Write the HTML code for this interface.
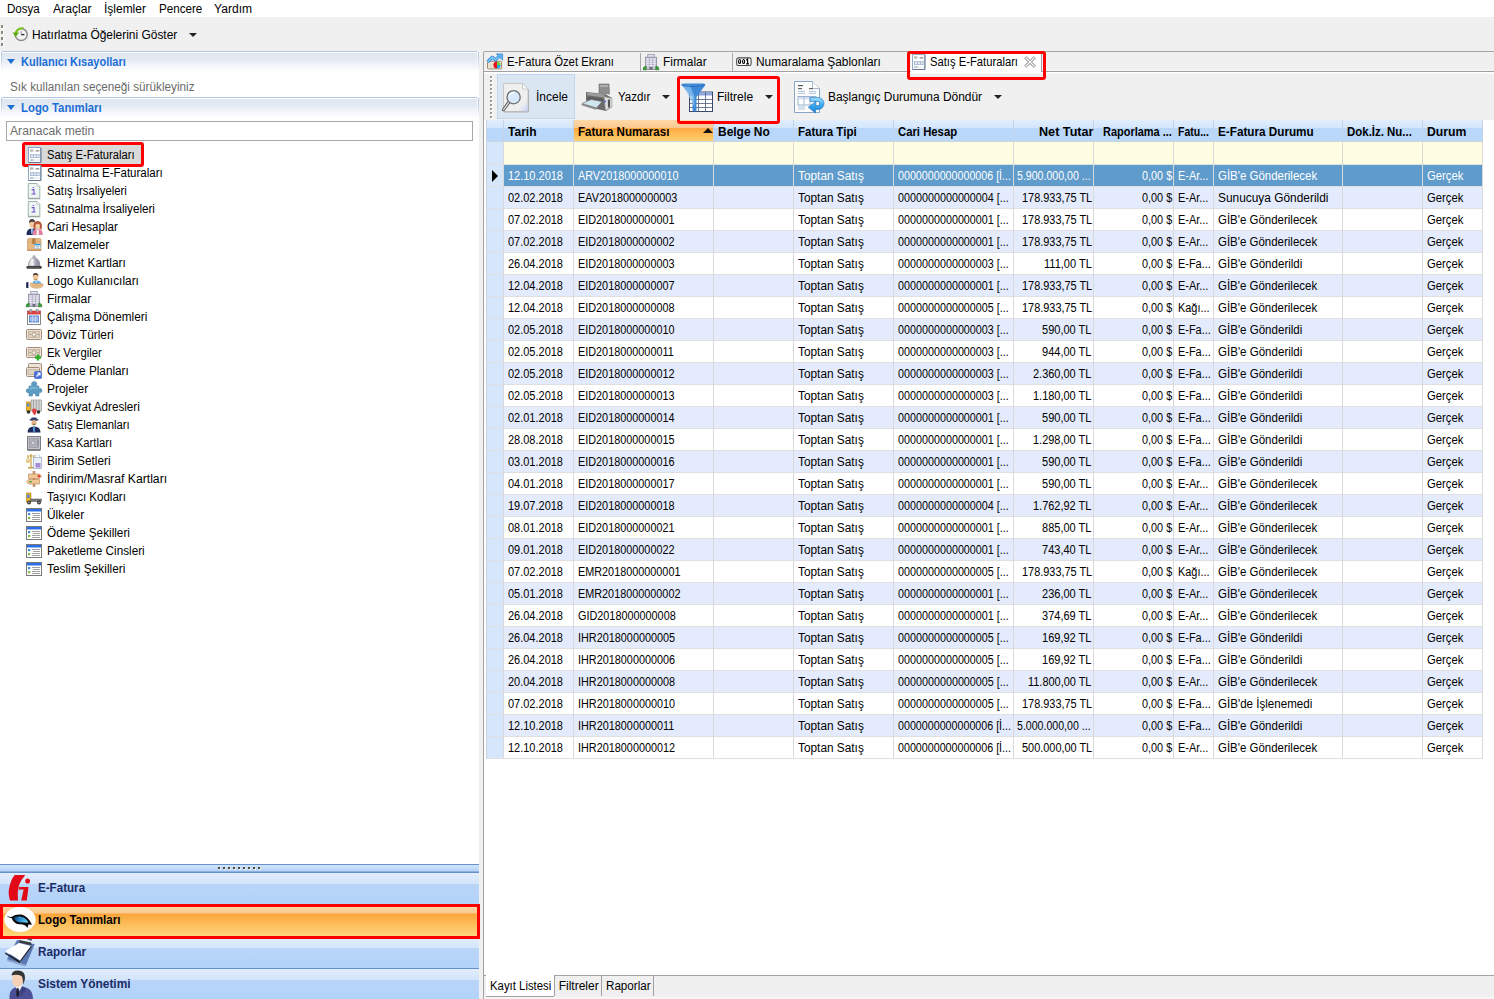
<!DOCTYPE html>
<html><head><meta charset="utf-8"><title>Logo</title>
<style>
*{margin:0;padding:0;box-sizing:border-box}
html,body{width:1494px;height:999px;overflow:hidden;background:#f0f0f0;font-family:"Liberation Sans",sans-serif;font-size:12px;color:#000}
.a{position:absolute}
svg{overflow:visible}
.t{position:absolute;white-space:nowrap;line-height:13px;transform-origin:0 0}
</style></head><body>

<div class="a" style="left:0px;top:0px;width:1494px;height:17px;background:#fff"></div>
<div class="t" style="left:6.82px;top:3.00px;transform:scaleX(0.9644)">Dosya</div>
<div class="t" style="left:52.59px;top:3.00px;transform:scaleX(1.0129)">Araçlar</div>
<div class="t" style="left:103.90px;top:3.00px;transform:scaleX(0.9975)">İşlemler</div>
<div class="t" style="left:158.72px;top:3.00px;transform:scaleX(0.9688)">Pencere</div>
<div class="t" style="left:214.40px;top:3.00px;transform:scaleX(1.0082)">Yardım</div>
<div class="a" style="left:1px;top:25px;width:2px;height:3px;background:#8d8a7e;box-shadow:1px 1px 0 #fff"></div>
<div class="a" style="left:1px;top:31px;width:2px;height:3px;background:#8d8a7e;box-shadow:1px 1px 0 #fff"></div>
<div class="a" style="left:1px;top:37px;width:2px;height:3px;background:#8d8a7e;box-shadow:1px 1px 0 #fff"></div>
<div class="a" style="left:1px;top:43px;width:2px;height:3px;background:#8d8a7e;box-shadow:1px 1px 0 #fff"></div>
<svg class="a" style="left:10px;top:24px" width="20" height="20" viewBox="0 0 20 20">
<circle cx="11.2" cy="10.6" r="6" fill="#f4f4f4" stroke="#8c8c8c" stroke-width="1.5"/>
<path d="M11.2 10.6h3.2" stroke="#222" stroke-width="1.3"/><path d="M11.2 7.2v3.4" stroke="#888" stroke-width="0.9"/>
<path d="M13.5 4.3 Q7.5 3.8 5.8 9.2" stroke="#7cc520" stroke-width="2.2" fill="none"/>
<path d="M2.6 8.4 L9 8.6 L5.6 13z" fill="#5eaa10"/>
</svg>
<div class="t" style="left:32.00px;top:29.00px;transform:scaleX(0.9949)">Hatırlatma Öğelerini Göster</div>
<div class="a" style="left:189px;top:33px;width:0px;height:0px;border-left:4px solid transparent;border-right:4px solid transparent;border-top:4px solid #222"></div>
<div class="a" style="left:0px;top:51px;width:479px;height:948px;background:#fff"></div>
<div class="a" style="left:1px;top:51px;width:478px;height:23px;border-radius:3px 3px 0 0;background:linear-gradient(#dfe6ef 2px,#e5ebf3 9px,#f4f6fa 15px,#ffffff 21px)"></div><div class="a" style="left:2px;top:51px;width:475px;height:1px;background:#b2c7df"></div><div class="a" style="left:2px;top:52px;width:475px;height:1px;background:#fff"></div><div class="a" style="left:1px;top:52px;width:1px;height:18px;background:linear-gradient(#b2c7df,rgba(178,199,223,0))"></div><div class="a" style="left:478px;top:52px;width:1px;height:18px;background:linear-gradient(#b2c7df,rgba(178,199,223,0))"></div><div class="a" style="left:477px;top:53px;width:1px;height:16px;background:linear-gradient(#fff,rgba(255,255,255,0))"></div><div class="a" style="left:7px;top:59px;width:0px;height:0px;border-left:4px solid transparent;border-right:4px solid transparent;border-top:5px solid #1d6fd0"></div><div class="t" style="left:21.24px;top:56.00px;transform:scaleX(0.9190);font-weight:bold;color:#1b6ed6">Kullanıcı Kısayolları</div>
<div class="t" style="left:9.81px;top:81.00px;transform:scaleX(0.9774);color:#6b6b6b">Sık kullanılan seçeneği sürükleyiniz</div>
<div class="a" style="left:1px;top:97px;width:478px;height:23px;border-radius:3px 3px 0 0;background:linear-gradient(#dfe6ef 2px,#e5ebf3 9px,#f4f6fa 15px,#ffffff 21px)"></div><div class="a" style="left:2px;top:97px;width:475px;height:1px;background:#b2c7df"></div><div class="a" style="left:2px;top:98px;width:475px;height:1px;background:#fff"></div><div class="a" style="left:1px;top:98px;width:1px;height:18px;background:linear-gradient(#b2c7df,rgba(178,199,223,0))"></div><div class="a" style="left:478px;top:98px;width:1px;height:18px;background:linear-gradient(#b2c7df,rgba(178,199,223,0))"></div><div class="a" style="left:477px;top:99px;width:1px;height:16px;background:linear-gradient(#fff,rgba(255,255,255,0))"></div><div class="a" style="left:7px;top:105px;width:0px;height:0px;border-left:4px solid transparent;border-right:4px solid transparent;border-top:5px solid #1d6fd0"></div><div class="t" style="left:21.23px;top:102.00px;transform:scaleX(0.9482);font-weight:bold;color:#1b6ed6">Logo Tanımları</div>
<div class="a" style="left:6px;top:121px;width:467px;height:20px;border:1px solid #a8a8a8;background:#fff"></div>
<div class="t" style="left:10.49px;top:125.00px;transform:scaleX(1.0111);color:#6d6d6d">Aranacak metin</div>
<div class="a" style="left:22px;top:142px;width:122px;height:25px;border:3px solid #ff0000;border-radius:3px;background:#d9d9d9"></div>
<svg class="a" style="left:27px;top:147px" width="16" height="16" viewBox="0 0 16 16"><path d="M1.5 0.5h12.4v15h-12.4z" fill="#fff" stroke="#93a8c2"/>
<path d="M13.9 1v14.5h-12.4" stroke="#5e6e86" fill="none" stroke-width="0.9"/>
<rect x="3" y="2.4" width="3.4" height="2.2" fill="#b4b4b4"/>
<rect x="8.6" y="3" width="3.6" height="1.6" fill="#a0a0a0"/>
<rect x="3" y="7.2" width="9.6" height="3.7" fill="#a6bad4"/>
<rect x="4.1" y="8.4" width="2" height="1.4" fill="#fff"/><rect x="7.1" y="8.4" width="2" height="1.4" fill="#fff"/><rect x="10.1" y="8.4" width="1.6" height="1.4" fill="#fff"/>
<rect x="3" y="12.4" width="9.6" height="1.3" fill="#e6e9ee"/><rect x="3" y="12.4" width="3.6" height="1.3" fill="#a6bad4"/></svg>
<div class="t" style="left:46.93px;top:149.00px;transform:scaleX(0.9305)">Satış E-Faturaları</div>
<svg class="a" style="left:27px;top:165px" width="16" height="16" viewBox="0 0 16 16"><path d="M1.5 0.5h12.4v15h-12.4z" fill="#fff" stroke="#93a8c2"/>
<path d="M13.9 1v14.5h-12.4" stroke="#5e6e86" fill="none" stroke-width="0.9"/>
<rect x="3" y="2.4" width="3.4" height="2.2" fill="#b4b4b4"/>
<rect x="8.6" y="3" width="3.6" height="1.6" fill="#a0a0a0"/>
<rect x="3" y="7.2" width="9.6" height="3.7" fill="#a6bad4"/>
<rect x="4.1" y="8.4" width="2" height="1.4" fill="#fff"/><rect x="7.1" y="8.4" width="2" height="1.4" fill="#fff"/><rect x="10.1" y="8.4" width="1.6" height="1.4" fill="#fff"/>
<rect x="3" y="12.4" width="9.6" height="1.3" fill="#e6e9ee"/><rect x="3" y="12.4" width="3.6" height="1.3" fill="#a6bad4"/></svg>
<div class="t" style="left:46.92px;top:167.00px;transform:scaleX(0.9584)">Satınalma E-Faturaları</div>
<svg class="a" style="left:27px;top:183px" width="16" height="16" viewBox="0 0 16 16"><path d="M1.3 0.5h8.7l2.8 2.8v12h-11.5z" fill="#eef6f4" stroke="#9fb2ae"/>
<path d="M10 0.5v2.8h2.8" fill="#fff" stroke="#b0c0bc" stroke-width="0.8"/>
<path d="M0.8 15.8h12.5" stroke="#7c8886" stroke-width="0.9" opacity="0.7"/>
<ellipse cx="6.4" cy="4.5" rx="0.9" ry="0.6" fill="#6a4ad8"/>
<path d="M4.7 6.6h2.3v4.2M4.6 10.9h3.9" stroke="#6a4ad8" stroke-width="1.05" fill="none"/></svg>
<div class="t" style="left:46.93px;top:185.00px;transform:scaleX(0.9422)">Satış İrsaliyeleri</div>
<svg class="a" style="left:27px;top:201px" width="16" height="16" viewBox="0 0 16 16"><path d="M1.3 0.5h8.7l2.8 2.8v12h-11.5z" fill="#eef6f4" stroke="#9fb2ae"/>
<path d="M10 0.5v2.8h2.8" fill="#fff" stroke="#b0c0bc" stroke-width="0.8"/>
<path d="M0.8 15.8h12.5" stroke="#7c8886" stroke-width="0.9" opacity="0.7"/>
<ellipse cx="6.4" cy="4.5" rx="0.9" ry="0.6" fill="#6a4ad8"/>
<path d="M4.7 6.6h2.3v4.2M4.6 10.9h3.9" stroke="#6a4ad8" stroke-width="1.05" fill="none"/></svg>
<div class="t" style="left:46.92px;top:203.00px;transform:scaleX(0.9688)">Satınalma İrsaliyeleri</div>
<svg class="a" style="left:27px;top:219px" width="16" height="16" viewBox="0 0 16 16"><path d="M-0.5 16 Q-0.5 10.5 3 9.8 L6.5 9.5 Q9.5 10 9.5 16z" fill="#1e2a60"/>
<path d="M4 9.6 H6.2 V14.5 H4z" fill="#f2f2f2"/><path d="M4.6 10 h1 l0.3 3.6 -0.8 0.9 -0.8 -0.9z" fill="#5a90d8"/>
<ellipse cx="4.9" cy="5.6" rx="2.5" ry="3.2" fill="#f3c9a1"/>
<path d="M2 5 Q1.6 0 5 0 Q8.6 0 8 5 L7.6 3.2 Q5 2.2 2.6 3.4z" fill="#4a3f3f"/>
<path d="M5.5 16 Q5.5 11 8.8 10.3 L12.5 10.3 Q15.8 11 15.8 16z" fill="#df7f9c"/>
<path d="M9.6 10.6 h2.2 v5.4 h-2.2z" fill="#f4f0f0"/>
<path d="M6.6 8.5 Q6 2 10.7 2 Q15.4 2 14.8 8.5 L14.6 11 Q13.6 9.6 12.8 9.4 L8.6 9.4 Q7.6 9.8 6.8 11z" fill="#b5563a"/>
<ellipse cx="10.7" cy="6.9" rx="2.3" ry="2.9" fill="#f6cfa6"/>
<path d="M8.3 5.5 Q10 3.2 13.2 5" stroke="#b5563a" stroke-width="1.2" fill="none"/></svg>
<div class="t" style="left:46.92px;top:221.00px;transform:scaleX(0.9651)">Cari Hesaplar</div>
<svg class="a" style="left:27px;top:237px" width="16" height="16" viewBox="0 0 16 16"><path d="M0.5 3 Q0.5 1.5 2 1.5 H12.5 Q14 1.5 14 3 V13.5 H0.5z" fill="#e6b883" stroke="#c08a50" stroke-width="0.6"/>
<path d="M0.8 4.8 H13.7" stroke="#d4a06a" stroke-width="0.6"/>
<rect x="5" y="1.5" width="3.6" height="5.5" fill="#b98048"/>
<rect x="7.5" y="7" width="6" height="4.6" fill="#eaf4fa" stroke="#8ab0d0" stroke-width="0.5"/>
<rect x="7.5" y="7" width="6" height="1.3" fill="#2a9ae8"/>
<rect x="9" y="9.3" width="3" height="1" fill="#9ab0c0"/>
<rect x="0.5" y="12.6" width="13.5" height="1.2" fill="#c48c58"/></svg>
<div class="t" style="left:46.90px;top:239.00px;transform:scaleX(1.0030)">Malzemeler</div>
<svg class="a" style="left:27px;top:255px" width="16" height="16" viewBox="0 0 16 16"><defs><linearGradient id="bellg" x1="0" y1="0" x2="1" y2="0"><stop offset="0" stop-color="#c8c8d0"/><stop offset="0.35" stop-color="#f4f4f8"/><stop offset="0.6" stop-color="#a8a8b8"/><stop offset="1" stop-color="#8a8a9a"/></linearGradient></defs>
<rect x="5.9" y="0.6" width="2.4" height="2.8" rx="1" fill="#c0c0c8" stroke="#8a8a92" stroke-width="0.5"/>
<path d="M1.4 11.2 Q1.4 3 7.1 3 Q12.9 3 12.9 11.2z" fill="url(#bellg)" stroke="#808088" stroke-width="0.6"/>
<rect x="-0.6" y="10.9" width="15.4" height="2.9" rx="1.3" fill="#3a3a3a"/>
<path d="M1 12.3 H13.2" stroke="#777" stroke-width="0.5"/></svg>
<div class="t" style="left:46.90px;top:257.00px;transform:scaleX(0.9943)">Hizmet Kartları</div>
<svg class="a" style="left:27px;top:273px" width="16" height="16" viewBox="0 0 16 16"><path d="M5.5 12 Q5 7.6 9 7.3 Q13.5 7.3 14.8 11.5z" fill="#6ab4e8"/>
<path d="M8.3 7.4 L9.3 9.5 L10.2 7.4z" fill="#fff"/>
<ellipse cx="8.6" cy="3.9" rx="2.7" ry="3.4" fill="#edc494"/>
<path d="M7.3 5.8 Q8.6 7.2 9.9 5.8 L9.6 7 Q8.6 7.6 7.6 7z" fill="#9a6a44"/>
<path d="M5.8 3.6 Q5.6 0 8.6 0 Q11.6 0 11.4 3.6 L10.8 2.2 Q8.6 1.3 6.4 2.2z" fill="#4a3830"/>
<path d="M3 10.2 Q6 9.6 9 11 Q12 10 16 11.2 Q16.5 13.5 14 14.6 Q10 15.8 6 14.8 Q3.5 14 3 12.5z" fill="#ecc08c" stroke="#b88a5a" stroke-width="0.5"/>
<path d="M5 12.4 Q9 13.4 14 12" stroke="#c89a68" stroke-width="0.5" fill="none"/>
<rect x="-0.8" y="9.2" width="2.4" height="5.8" fill="#1a2050"/><rect x="1.6" y="9.4" width="1.6" height="5.4" fill="#f4f4f4"/></svg>
<div class="t" style="left:46.90px;top:275.00px;transform:scaleX(0.9911)">Logo Kullanıcıları</div>
<svg class="a" style="left:27px;top:291px" width="16" height="16" viewBox="0 0 16 16"><rect x="3.8" y="0.6" width="6.4" height="3" fill="#e2e2f0" stroke="#8a8a9c" stroke-width="0.7"/>
<rect x="1.6" y="3.2" width="10.8" height="12.4" fill="#c6c6d8" stroke="#7c7c8e" stroke-width="0.7"/>
<rect x="2.4" y="4.4" width="9.2" height="1.1" fill="#eeeef8"/><rect x="2.4" y="6.6" width="9.2" height="1.1" fill="#eeeef8"/>
<rect x="2.4" y="8.8" width="9.2" height="1.1" fill="#eeeef8"/><rect x="2.4" y="11" width="9.2" height="1.1" fill="#eeeef8"/>
<path d="M5.3 4v8.5M8.6 4v8.5" stroke="#9a9aae" stroke-width="0.6"/>
<rect x="5.5" y="13" width="3" height="2.6" fill="#6a6a7a"/>
<path d="M-1 15.8 Q-1.2 12.2 2.3 12.2 V15.8z" fill="#3aa23a" stroke="#1f6e1f" stroke-width="0.5"/>
<path d="M11.7 12.2 Q15.2 12 15 15.8 H11.7z" fill="#3aa23a" stroke="#1f6e1f" stroke-width="0.5"/></svg>
<div class="t" style="left:46.90px;top:293.00px;transform:scaleX(1.0046)">Firmalar</div>
<svg class="a" style="left:26px;top:309px" width="16" height="16" viewBox="0 0 16 16"><rect x="1.5" y="2" width="13" height="13.5" fill="#fff" stroke="#888"/>
<rect x="1.5" y="2" width="13" height="3.5" fill="#e04040"/>
<rect x="4" y="0.5" width="1.5" height="3" fill="#ccc" stroke="#777" stroke-width="0.5"/><rect x="10.5" y="0.5" width="1.5" height="3" fill="#ccc" stroke="#777" stroke-width="0.5"/>
<rect x="3.5" y="7" width="9" height="6" fill="#8eaee6" stroke="#3f6fd0" stroke-width="0.8"/>
<path d="M3.5 9h9M3.5 11h9M6.5 7v6M9.5 7v6" stroke="#d8e4f8" stroke-width="0.6"/></svg>
<div class="t" style="left:46.91px;top:311.00px;transform:scaleX(0.9831)">Çalışma Dönemleri</div>
<svg class="a" style="left:26px;top:327px" width="16" height="16" viewBox="0 0 16 16"><rect x="0.5" y="2.5" width="15" height="10" rx="1" fill="#ece4d8" stroke="#a08c78"/>
<rect x="2.5" y="4.5" width="11" height="6" fill="#e0d4c2" stroke="#b8a690" stroke-width="0.7"/>
<circle cx="8" cy="7.5" r="2" fill="#f3ede4" stroke="#8a7866" stroke-width="0.6"/>
<rect x="3.5" y="7" width="1" height="1" fill="#8a7866"/><rect x="11.5" y="7" width="1" height="1" fill="#8a7866"/></svg>
<div class="t" style="left:46.90px;top:329.00px;transform:scaleX(0.9922)">Döviz Türleri</div>
<svg class="a" style="left:26px;top:345px" width="16" height="16" viewBox="0 0 16 16"><rect x="0.5" y="2.5" width="15" height="10" rx="1" fill="#ece4d8" stroke="#a08c78"/>
<rect x="2.5" y="4.5" width="11" height="6" fill="#e0d4c2" stroke="#b8a690" stroke-width="0.7"/>
<circle cx="8" cy="7.5" r="2" fill="#f3ede4" stroke="#8a7866" stroke-width="0.6"/>
<rect x="3.5" y="7" width="1" height="1" fill="#8a7866"/><rect x="11.5" y="7" width="1" height="1" fill="#8a7866"/><path d="M12 9.5v6M9 12.5h6" stroke="#2eae2e" stroke-width="2.4"/></svg>
<div class="t" style="left:46.93px;top:347.00px;transform:scaleX(0.9444)">Ek Vergiler</div>
<svg class="a" style="left:26px;top:363px" width="16" height="16" viewBox="0 0 16 16"><rect x="2.5" y="0.5" width="13" height="8" rx="1" fill="#ece4d8" stroke="#a08c78"/>
<rect x="0.5" y="4.5" width="13" height="9" rx="1" fill="#ece4d8" stroke="#a08c78"/>
<rect x="2" y="6.5" width="10" height="5" fill="#e0d4c2" stroke="#b8a690" stroke-width="0.7"/>
<rect x="8.5" y="8.5" width="7" height="7" rx="1" fill="#4a74e0" stroke="#2d4fb0" stroke-width="0.6"/>
<path d="M10.5 13.5 L14 10M11.5 10h2.5v2.5" stroke="#fff" stroke-width="1.1" fill="none"/></svg>
<div class="t" style="left:46.91px;top:365.00px;transform:scaleX(0.9811)">Ödeme Planları</div>
<svg class="a" style="left:26px;top:381px" width="16" height="16" viewBox="0 0 16 16"><path d="M3 5 H6 Q5 3.5 5.5 2.2 Q6.5 0.3 8.5 0.5 Q10.5 0.8 10.8 2.5 Q11 3.7 10 5 H13 V8 Q14 7.2 15 7.6 Q16.2 8.4 16 10 Q15.6 11.8 13.8 11.6 Q13.3 11.5 13 11.3 V15 H9.5 Q10 14 9.5 13.2 Q8.8 12.2 7.5 12.5 Q6.3 13 6.5 15 H3 V11.5 Q2 12.2 1.1 11.6 Q-0.2 10.6 0.3 9 Q0.9 7.6 2.2 7.9 Q2.7 8 3 8.3z" fill="#5b9cc0" stroke="#3f7fa3" stroke-width="0.5"/>
<path d="M4 6 H12 V8 Q8 7 4 9z" fill="#8cc0dc" opacity="0.6"/></svg>
<div class="t" style="left:46.90px;top:383.00px;transform:scaleX(0.9940)">Projeler</div>
<svg class="a" style="left:26px;top:399px" width="16" height="16" viewBox="0 0 16 16"><rect x="0.5" y="3" width="4" height="9" fill="#f2b824" stroke="#a77a10" stroke-width="0.6"/>
<rect x="1" y="4.5" width="2.5" height="3" fill="#5e86c7"/>
<rect x="5" y="1" width="10.5" height="11" fill="#d4d4d4" stroke="#888" stroke-width="0.6"/>
<path d="M7.5 1.5v10M10.3 1.5v10M13 1.5v10" stroke="#999" stroke-width="0.8"/>
<circle cx="2.5" cy="13" r="1.8" fill="#333"/><circle cx="12.5" cy="13" r="1.8" fill="#333"/>
<path d="M8 9.5 Q10.5 9.5 10.5 11.8 Q10.5 13 9.2 16 L8.2 16 Q6 13 6 11.8 Q6 9.5 8 9.5z" fill="#e23b3b"/></svg>
<div class="t" style="left:46.91px;top:401.00px;transform:scaleX(0.9730)">Sevkiyat Adresleri</div>
<svg class="a" style="left:26px;top:417px" width="16" height="16" viewBox="0 0 16 16"><ellipse cx="8" cy="2.8" rx="4.5" ry="1" fill="#333a5c"/><rect x="5.2" y="0.5" width="5.6" height="2.5" rx="1" fill="#3a4270"/>
<circle cx="8" cy="5.8" r="2.6" fill="#e9b88a"/>
<path d="M6.5 7 Q8 8 9.5 7" stroke="#5a3a22" stroke-width="0.7" fill="none"/>
<path d="M1.5 15.5 Q1.5 9.5 8 9.5 Q14.5 9.5 14.5 15.5z" fill="#1e2a58"/>
<path d="M7 9.5h2l-0.2 6h-1.6z" fill="#5a9ad8"/></svg>
<div class="t" style="left:46.93px;top:419.00px;transform:scaleX(0.9394)">Satış Elemanları</div>
<svg class="a" style="left:26px;top:435px" width="16" height="16" viewBox="0 0 16 16"><rect x="1.5" y="1.5" width="13" height="13" fill="#c4c4cc" stroke="#7d7d86"/>
<rect x="3.5" y="3.5" width="9" height="9" fill="#b2b2bb" stroke="#8d8d96" stroke-width="0.6"/>
<circle cx="7" cy="8" r="2" fill="#d6d6dc" stroke="#85858f" stroke-width="0.6"/>
<path d="M12 5v6" stroke="#85858f"/>
<path d="M1.5 15.5h13" stroke="#888"/></svg>
<div class="t" style="left:46.93px;top:437.00px;transform:scaleX(0.9385)">Kasa Kartları</div>
<svg class="a" style="left:26px;top:453px" width="16" height="16" viewBox="0 0 16 16"><path d="M5 1v13M1 3h8" stroke="#c8a040" stroke-width="1.2"/>
<path d="M0.5 8 L2 3.5 L3.5 8z" fill="none" stroke="#c8a040" stroke-width="0.7"/>
<path d="M0 8h4 Q3.5 10 2 10 Q0.5 10 0 8z" fill="#e8c060"/>
<rect x="2" y="14" width="6" height="1.5" fill="#c8a040"/>
<rect x="7.5" y="4.5" width="8" height="11" fill="#e8f0f8" stroke="#98aac0" stroke-width="0.7"/>
<path d="M10 1.5l-1.5 3M12.5 1.5l2 3" stroke="#98aac0" stroke-width="0.7"/>
<rect x="9.5" y="10" width="5" height="4.5" fill="#a88ad8"/></svg>
<div class="t" style="left:46.91px;top:455.00px;transform:scaleX(0.9818)">Birim Setleri</div>
<svg class="a" style="left:26px;top:471px" width="16" height="16" viewBox="0 0 16 16"><rect x="7" y="0.5" width="2" height="15" fill="#d8a070" stroke="#a07040" stroke-width="0.5"/>
<path d="M2.5 3h11l2 2.2-2 2.3h-11z" fill="#f0c898" stroke="#b88050" stroke-width="0.6"/>
<path d="M13.5 8.5h-11l-2 2.2 2 2.3h11z" fill="#f0c898" stroke="#b88050" stroke-width="0.6"/>
<path d="M11.5 5.2h3M13 3.8v2.8" stroke="#e02020" stroke-width="1.1"/>
<rect x="3" y="10.2" width="3" height="1.1" fill="#30a030"/></svg>
<div class="t" style="left:46.89px;top:473.00px;transform:scaleX(1.0175)">İndirim/Masraf Kartları</div>
<svg class="a" style="left:26px;top:489px" width="16" height="16" viewBox="0 0 16 16"><rect x="0.5" y="4" width="4.5" height="9" fill="#f2b824" stroke="#a77a10" stroke-width="0.6"/>
<rect x="1" y="5.5" width="2.8" height="3.5" fill="#5e86c7"/>
<rect x="4.5" y="10" width="11" height="2.5" fill="#7a7a7a" stroke="#555" stroke-width="0.5"/>
<circle cx="3" cy="13.5" r="1.9" fill="#333"/><circle cx="3" cy="13.5" r="0.7" fill="#ddd"/>
<circle cx="13" cy="13.5" r="1.9" fill="#333"/><circle cx="13" cy="13.5" r="0.7" fill="#ddd"/></svg>
<div class="t" style="left:46.92px;top:491.00px;transform:scaleX(0.9618)">Taşıyıcı Kodları</div>
<svg class="a" style="left:26px;top:507px" width="16" height="16" viewBox="0 0 16 16"><rect x="0.5" y="1.5" width="15" height="13" fill="#fff" stroke="#7a7a7a"/>
<rect x="1" y="2" width="14" height="2.5" fill="#2c6ee6"/>
<rect x="2" y="6" width="2.2" height="2.2" fill="#3a8ad0"/><rect x="2" y="10" width="2.2" height="2.2" fill="#80b840"/>
<path d="M6 6.5h8M7 8.5h7M6 10.5h8M6 12.5h8" stroke="#888" stroke-width="0.8"/></svg>
<div class="t" style="left:46.90px;top:509.00px;transform:scaleX(0.9936)">Ülkeler</div>
<svg class="a" style="left:26px;top:525px" width="16" height="16" viewBox="0 0 16 16"><rect x="0.5" y="1.5" width="15" height="13" fill="#fff" stroke="#7a7a7a"/>
<rect x="1" y="2" width="14" height="2.5" fill="#2c6ee6"/>
<rect x="2" y="6" width="2.2" height="2.2" fill="#3a8ad0"/><rect x="2" y="10" width="2.2" height="2.2" fill="#80b840"/>
<path d="M6 6.5h8M7 8.5h7M6 10.5h8M6 12.5h8" stroke="#888" stroke-width="0.8"/></svg>
<div class="t" style="left:46.91px;top:527.00px;transform:scaleX(0.9788)">Ödeme Şekilleri</div>
<svg class="a" style="left:26px;top:543px" width="16" height="16" viewBox="0 0 16 16"><rect x="0.5" y="1.5" width="15" height="13" fill="#fff" stroke="#7a7a7a"/>
<rect x="1" y="2" width="14" height="2.5" fill="#2c6ee6"/>
<rect x="2" y="6" width="2.2" height="2.2" fill="#3a8ad0"/><rect x="2" y="10" width="2.2" height="2.2" fill="#80b840"/>
<path d="M6 6.5h8M7 8.5h7M6 10.5h8M6 12.5h8" stroke="#888" stroke-width="0.8"/></svg>
<div class="t" style="left:46.91px;top:545.00px;transform:scaleX(0.9766)">Paketleme Cinsleri</div>
<svg class="a" style="left:26px;top:561px" width="16" height="16" viewBox="0 0 16 16"><rect x="0.5" y="1.5" width="15" height="13" fill="#fff" stroke="#7a7a7a"/>
<rect x="1" y="2" width="14" height="2.5" fill="#2c6ee6"/>
<rect x="2" y="6" width="2.2" height="2.2" fill="#3a8ad0"/><rect x="2" y="10" width="2.2" height="2.2" fill="#80b840"/>
<path d="M6 6.5h8M7 8.5h7M6 10.5h8M6 12.5h8" stroke="#888" stroke-width="0.8"/></svg>
<div class="t" style="left:46.91px;top:563.00px;transform:scaleX(0.9868)">Teslim Şekilleri</div>
<div class="a" style="left:0px;top:864px;width:479px;height:9px;background:linear-gradient(#6591cd 0 1px,#d3e5fb 1px,#c2dbf9 4px,#b6d3f8 7px,#6591cd 8px)"></div>
<div class="a" style="left:218px;top:867px;width:2px;height:2px;background:#4d4a44;box-shadow:1px 1px 0 #f4eee0"></div>
<div class="a" style="left:223px;top:867px;width:2px;height:2px;background:#4d4a44;box-shadow:1px 1px 0 #f4eee0"></div>
<div class="a" style="left:228px;top:867px;width:2px;height:2px;background:#4d4a44;box-shadow:1px 1px 0 #f4eee0"></div>
<div class="a" style="left:233px;top:867px;width:2px;height:2px;background:#4d4a44;box-shadow:1px 1px 0 #f4eee0"></div>
<div class="a" style="left:238px;top:867px;width:2px;height:2px;background:#4d4a44;box-shadow:1px 1px 0 #f4eee0"></div>
<div class="a" style="left:243px;top:867px;width:2px;height:2px;background:#4d4a44;box-shadow:1px 1px 0 #f4eee0"></div>
<div class="a" style="left:248px;top:867px;width:2px;height:2px;background:#4d4a44;box-shadow:1px 1px 0 #f4eee0"></div>
<div class="a" style="left:253px;top:867px;width:2px;height:2px;background:#4d4a44;box-shadow:1px 1px 0 #f4eee0"></div>
<div class="a" style="left:258px;top:867px;width:2px;height:2px;background:#4d4a44;box-shadow:1px 1px 0 #f4eee0"></div>
<div class="a" style="left:0px;top:873px;width:479px;height:31px;background:linear-gradient(#e0edfc,#d3e5fb 11px,#b9d6f9 11px,#b2d2f8)"></div><div class="t" style="left:37.72px;top:882.00px;transform:scaleX(0.9676);font-weight:bold;color:#1c2a66">E-Fatura</div>
<div class="a" style="left:0px;top:904px;width:480px;height:35px;border:3px solid #ff0000;background:linear-gradient(#fcd9a8,#fbc98f 6px,#fba53a 7px,#fcbf5c 18px,#fed77e)"></div>
<div class="t" style="left:37.72px;top:914.00px;transform:scaleX(0.9681);font-weight:bold;color:#000">Logo Tanımları</div>
<div class="a" style="left:0px;top:939px;width:479px;height:29px;background:linear-gradient(#e0edfc,#d3e5fb 9px,#b9d6f9 9px,#b2d2f8)"></div><div class="t" style="left:37.71px;top:946.00px;transform:scaleX(0.9727);font-weight:bold;color:#1c2a66">Raporlar</div>
<div class="a" style="left:0px;top:968px;width:479px;height:1px;background:#6591cd"></div>
<div class="a" style="left:0px;top:969px;width:479px;height:30px;background:linear-gradient(#e0edfc,#d3e5fb 11px,#b9d6f9 11px,#b2d2f8)"></div><div class="t" style="left:37.70px;top:978.00px;transform:scaleX(0.9942);font-weight:bold;color:#1c2a66">Sistem Yönetimi</div>
<svg class="a" style="left:0px;top:872px" width="40" height="32" viewBox="0 0 40 32"><path d="M14.7 3 H25.3 Q21 8 19 13 Q17 21 18 28.5 H10 Q8 22 9 17 Q10.5 8 14.7 3z" fill="#e20a17"/>
<path d="M19.2 15 H28.5 L26.8 28.5 H21.2 L23.6 17.6 H18.8z" fill="#e20a17"/>
<ellipse cx="27.6" cy="9" rx="2.4" ry="2.6" fill="#e20a17"/></svg>
<svg class="a" style="left:3px;top:904px" width="37" height="32" viewBox="3 0 37 32"><defs><linearGradient id="iris" x1="0" y1="0" x2="1" y2="0.3"><stop offset="0" stop-color="#0b3a74"/><stop offset="0.45" stop-color="#2582c6"/><stop offset="1" stop-color="#5ccaf2"/></linearGradient></defs>
<ellipse cx="19.9" cy="15.5" rx="15.7" ry="12.5" fill="#fff"/>
<path d="M6.3 11.8 Q9.5 13.4 12 12.8 Q15.5 9.8 21.5 10.6 Q27.8 12 32 20.8 L28.4 20.6 L27.6 24 Q25.6 20.6 20 20.3 Q14 20 11.6 13.9 Q9 14.3 6.3 11.8z" fill="#0a0a0a"/>
<path d="M13.8 13.6 Q17 12.2 21.4 12.8 Q26.2 13.9 28.4 18.8 Q24.5 18.2 19.6 18.2 Q15.6 18 13.8 13.6z" fill="url(#iris)"/>
<path d="M19.2 13.2 l0.9 -0.3 l-0.3 1.7z" fill="#e8f6ff"/></svg>
<svg class="a" style="left:0px;top:936px" width="40" height="33" viewBox="0 0 40 33"><path d="M17 4 L34.7 8.2 L26 29 L7 23.3z" fill="#5a78b4"/>
<path d="M7 23.3 L26 29 L25.5 30.5 L7.5 25z" fill="#8aa0c8"/>
<path d="M5.4 16.5 L20.5 25.6 L19.6 27 L5 17.8z" fill="#1c1c1c"/>
<path d="M5.4 15 L19 6.9 L31 10 L20.2 24.6z" fill="#fff"/>
<path d="M31 10 L20.2 24.6 L21.2 25 L32 10.5z" fill="#2a2a2a"/>
<path d="M19 4 L31 6.5 L31.6 9.2 L19.5 6.6z" fill="#3a3a3a"/>
<path d="M28 2 L32 3 L31.6 4.8 L27.6 3.8z" fill="#555"/></svg>
<svg class="a" style="left:0px;top:969px" width="40" height="30" viewBox="0 0 40 30"><path d="M9.5 30 Q9 21 14 19 L18 17.5 L22 17 L28 19.5 Q33 22 33 30z" fill="#4c5096"/>
<path d="M15.5 17.5 L18 23 L23.5 17 L22 15.5z" fill="#eef0f4"/>
<path d="M16.6 19.5 L18.6 19 L19.2 26 L17.6 28.5 L16.4 26z" fill="#1a1a24"/>
<path d="M22 17 L26 20 L21 28 L20 22z" fill="#3d4180"/>
<ellipse cx="17.5" cy="10.8" rx="5.4" ry="7.2" fill="#f6d0b4"/>
<path d="M21.5 14 Q23 12 22.8 9 L21.5 15.5z" fill="#e0b090"/>
<path d="M11.5 6.5 Q12 1.2 18.5 1.5 Q25.5 2 25 9.5 Q24.5 13 23 15.5 Q23.2 9 21.5 7 Q17 5 11.5 6.5z" fill="#353535"/></svg>
<div class="a" style="left:483px;top:51px;width:1011px;height:948px;border-left:1px solid #a0a0a0;border-top:1px solid #a4a4a4;border-radius:2px 0 0 0"></div>
<div class="a" style="left:484px;top:70px;width:1010px;height:1px;background:#f6f6f6"></div>
<div class="a" style="left:484px;top:71px;width:1010px;height:1px;background:#a0a0a0"></div>
<div class="a" style="left:640px;top:53px;width:1px;height:18px;background:#a8a8a8"></div>
<div class="a" style="left:732px;top:53px;width:1px;height:18px;background:#a8a8a8"></div>
<svg class="a" style="left:484px;top:52px" width="24" height="20" viewBox="0 0 24 20"><rect x="3.5" y="9.3" width="14" height="7.6" rx="0.8" fill="#efe6d6" stroke="#9a8266" stroke-width="0.9"/>
<path d="M5 12.5h5M5 14.5h5" stroke="#d8ccb4" stroke-width="0.6"/>
<path d="M3.6 10 L8.4 5.2 L11.4 8 L15.4 4.2" stroke="#3a8ad8" stroke-width="3.2" fill="none" stroke-linejoin="round"/>
<path d="M3.6 10 L8.4 5.2 L11.4 8 L15.4 4.2" stroke="#7cc8f8" stroke-width="1.6" fill="none" stroke-linejoin="round"/>
<path d="M12.3 1.9 H18.6 V8.2z" fill="#62b4f0" stroke="#3a8ad8" stroke-width="0.8"/>
<path d="M13 16.6 A3.6 3.6 0 0 1 13 9.4z" fill="#e8101c"/>
<path d="M13 9.4 A3.6 3.6 0 0 1 16.6 13 H13z" fill="#70d040"/>
<path d="M16.6 13 A3.6 3.6 0 0 1 13 16.6 V13z" fill="#1ab0f0"/></svg>
<div class="t" style="left:506.83px;top:56.00px;transform:scaleX(0.9429)">E-Fatura Özet Ekranı</div>
<svg class="a" style="left:644px;top:54px" width="16" height="16" viewBox="0 0 16 16"><rect x="3.8" y="0.6" width="6.4" height="3" fill="#e2e2f0" stroke="#8a8a9c" stroke-width="0.7"/>
<rect x="1.6" y="3.2" width="10.8" height="12.4" fill="#c6c6d8" stroke="#7c7c8e" stroke-width="0.7"/>
<rect x="2.4" y="4.4" width="9.2" height="1.1" fill="#eeeef8"/><rect x="2.4" y="6.6" width="9.2" height="1.1" fill="#eeeef8"/>
<rect x="2.4" y="8.8" width="9.2" height="1.1" fill="#eeeef8"/><rect x="2.4" y="11" width="9.2" height="1.1" fill="#eeeef8"/>
<path d="M5.3 4v8.5M8.6 4v8.5" stroke="#9a9aae" stroke-width="0.6"/>
<rect x="5.5" y="13" width="3" height="2.6" fill="#6a6a7a"/>
<path d="M-1 15.8 Q-1.2 12.2 2.3 12.2 V15.8z" fill="#3aa23a" stroke="#1f6e1f" stroke-width="0.5"/>
<path d="M11.7 12.2 Q15.2 12 15 15.8 H11.7z" fill="#3aa23a" stroke="#1f6e1f" stroke-width="0.5"/></svg>
<div class="t" style="left:662.80px;top:56.00px;transform:scaleX(0.9909)">Firmalar</div>
<svg class="a" style="left:733px;top:52px" width="24" height="20" viewBox="0 0 24 20"><rect x="3.7" y="5.9" width="14.4" height="7.6" rx="1.6" fill="#fff" stroke="#4a4a4a" stroke-width="1.1"/>
<ellipse cx="6.6" cy="9.5" rx="1.05" ry="2" fill="none" stroke="#000" stroke-width="1.15"/>
<ellipse cx="10.6" cy="9.5" rx="1.05" ry="2" fill="none" stroke="#000" stroke-width="1.15"/>
<path d="M13.3 8.2 L14.6 7.2 V11.8 M13.2 11.8 H16" stroke="#000" stroke-width="1.2" fill="none"/></svg>
<div class="t" style="left:755.70px;top:56.00px;transform:scaleX(0.9900)">Numaralama Şablonları</div>
<div class="a" style="left:911px;top:52px;width:131px;height:24px;background:#fff;border-right:1px solid #a0a0a0"></div>
<div class="a" style="left:911px;top:74px;width:131px;height:2px;background:#ececec"></div>
<svg class="a" style="left:911px;top:54px" width="16" height="16" viewBox="0 0 16 16"><path d="M1.5 0.5h12.4v15h-12.4z" fill="#fff" stroke="#93a8c2"/>
<path d="M13.9 1v14.5h-12.4" stroke="#5e6e86" fill="none" stroke-width="0.9"/>
<rect x="3" y="2.4" width="3.4" height="2.2" fill="#b4b4b4"/>
<rect x="8.6" y="3" width="3.6" height="1.6" fill="#a0a0a0"/>
<rect x="3" y="7.2" width="9.6" height="3.7" fill="#a6bad4"/>
<rect x="4.1" y="8.4" width="2" height="1.4" fill="#fff"/><rect x="7.1" y="8.4" width="2" height="1.4" fill="#fff"/><rect x="10.1" y="8.4" width="1.6" height="1.4" fill="#fff"/>
<rect x="3" y="12.4" width="9.6" height="1.3" fill="#e6e9ee"/><rect x="3" y="12.4" width="3.6" height="1.3" fill="#a6bad4"/></svg>
<div class="t" style="left:929.53px;top:56.00px;transform:scaleX(0.9358)">Satış E-Faturaları</div>
<svg class="a" style="left:1024px;top:56px" width="12" height="12" viewBox="0 0 12 12"><path d="M1.2 1.2L10.8 10.8M10.8 1.2L1.2 10.8" stroke="#8a8a8a" stroke-width="3"/><path d="M1.5 1.5L10.5 10.5M10.5 1.5L1.5 10.5" stroke="#fff" stroke-width="1.2"/></svg>
<div class="a" style="left:484px;top:72px;width:1010px;height:1px;background:#fff"></div>
<div class="a" style="left:484px;top:73px;width:1010px;height:1px;background:#f7f7f7"></div>
<div class="a" style="left:490px;top:76px;width:2px;height:2px;background:#a09c90;box-shadow:1px 1px 0 #fff"></div>
<div class="a" style="left:490px;top:80px;width:2px;height:2px;background:#a09c90;box-shadow:1px 1px 0 #fff"></div>
<div class="a" style="left:490px;top:84px;width:2px;height:2px;background:#a09c90;box-shadow:1px 1px 0 #fff"></div>
<div class="a" style="left:490px;top:88px;width:2px;height:2px;background:#a09c90;box-shadow:1px 1px 0 #fff"></div>
<div class="a" style="left:490px;top:92px;width:2px;height:2px;background:#a09c90;box-shadow:1px 1px 0 #fff"></div>
<div class="a" style="left:490px;top:96px;width:2px;height:2px;background:#a09c90;box-shadow:1px 1px 0 #fff"></div>
<div class="a" style="left:490px;top:100px;width:2px;height:2px;background:#a09c90;box-shadow:1px 1px 0 #fff"></div>
<div class="a" style="left:490px;top:104px;width:2px;height:2px;background:#a09c90;box-shadow:1px 1px 0 #fff"></div>
<div class="a" style="left:490px;top:108px;width:2px;height:2px;background:#a09c90;box-shadow:1px 1px 0 #fff"></div>
<div class="a" style="left:490px;top:112px;width:2px;height:2px;background:#a09c90;box-shadow:1px 1px 0 #fff"></div>
<div class="a" style="left:490px;top:116px;width:2px;height:2px;background:#a09c90;box-shadow:1px 1px 0 #fff"></div>
<div class="a" style="left:497px;top:74px;width:78px;height:45px;background:#dae6f2;border:1px solid #c0d8f0"></div>
<svg class="a" style="left:499px;top:76px" width="32" height="40" viewBox="0 0 32 40"><defs><linearGradient id="pg" x1="0" y1="0" x2="1" y2="1"><stop offset="0.75" stop-color="#efefef"/><stop offset="1" stop-color="#c4cef8"/></linearGradient></defs>
<path d="M4.5 7.5h19l5.5 5.5v22.5h-24.5z" fill="url(#pg)" stroke="#c8c8c8"/>
<path d="M29.5 13.5v22.5h-24.5" fill="none" stroke="#a8a8a8" stroke-width="0.8"/>
<path d="M23.5 7.5v5.5h5.5z" fill="#fff" stroke="#c0c0c0" stroke-width="0.8"/>
<path d="M10.2 25.8 L4.6 33.6" stroke="#5a5a5a" stroke-width="3.2" stroke-linecap="round"/>
<path d="M10.2 25.8 L4.6 33.6" stroke="#e0e0e0" stroke-width="1.3" stroke-linecap="round"/>
<circle cx="14.6" cy="21.2" r="6.6" fill="#d8e9fb" stroke="#6e6e6e" stroke-width="1.3"/>
<path d="M10.5 19.5 Q11.5 16.5 15.5 16.3" stroke="#fff" stroke-width="1.3" fill="none"/></svg>
<div class="t" style="left:536.00px;top:91.00px;transform:scaleX(0.9994)">İncele</div>
<svg class="a" style="left:578px;top:78px" width="40" height="40" viewBox="0 0 40 40"><path d="M21 6 L31 6 L31.5 16 L21 15z" fill="#8e8e8e" stroke="#6a6a6a" stroke-width="0.6"/>
<path d="M22 7 L30 7 L30.3 9 L22 9z" fill="#b0b0b0"/>
<path d="M8 14 L27 16 L34 20 L34 29 L28 33 L10 29 L8 22z" fill="#6b6b6b"/>
<path d="M9 14.5 L27 16.5 L25.5 19.5 L9 17.2z" fill="#9c9c9c"/>
<path d="M10 19 L25 21 L25 24 L10 22z" fill="#5a5a5a"/>
<path d="M26 18.5 L34 20.5 L34 29 L27.5 32.5z" fill="#dadede" stroke="#8a8a8a" stroke-width="0.5"/>
<path d="M31 21.5 V29.5" stroke="#505454" stroke-width="2.2"/>
<circle cx="27" cy="23.5" r="1" fill="#4a5ad0"/>
<path d="M4 25.5 L13 21.5 L24 23.5 L18.5 30z" fill="#cfe6ee" stroke="#7a7a7a" stroke-width="0.7"/>
<path d="M4 25.5 L18.5 30 L18 31.8 L3.5 27.2z" fill="#8a8a8a"/></svg>
<div class="t" style="left:617.52px;top:91.00px;transform:scaleX(0.9588)">Yazdır</div>
<div class="a" style="left:662px;top:95px;width:0px;height:0px;border-left:4px solid transparent;border-right:4px solid transparent;border-top:4px solid #222"></div>
<svg class="a" style="left:681px;top:81px" width="32" height="32" viewBox="0 0 32 32"><rect x="8.5" y="11" width="23" height="19.5" fill="#fff" stroke="#3a4a6a"/>
<rect x="9" y="11.5" width="22" height="3" fill="#8fa6e0"/>
<path d="M9 18.5h22M9 22.5h22M9 26.5h22M17.5 11v19.5M24.5 11v19.5" stroke="#4a5a7a" stroke-width="0.8"/>
<path d="M0.5 4 Q0.5 2.5 3 2.5 H22 Q25 2.5 24 4.5 L15.5 16 V30 Q13 31 11.5 29.5 V16z" fill="#3f8ad6"/>
<path d="M2 4.5 H9 L13.5 15.5 V26z" fill="#8cc4f2" opacity="0.7"/>
<path d="M0.5 3.5 Q3 5.5 12 5.5 Q21 5.5 24 3.5" stroke="#2b6fc0" stroke-width="1" fill="none"/></svg>
<div class="t" style="left:716.80px;top:91.00px;transform:scaleX(1.0026)">Filtrele</div>
<div class="a" style="left:765px;top:95px;width:0px;height:0px;border-left:4px solid transparent;border-right:4px solid transparent;border-top:4px solid #222"></div>
<svg class="a" style="left:790px;top:78px" width="40" height="40" viewBox="0 0 40 40"><defs><linearGradient id="rarr" x1="0" y1="0" x2="0" y2="1"><stop offset="0" stop-color="#9fe0ff"/><stop offset="0.5" stop-color="#3aaaf0"/><stop offset="1" stop-color="#1a78d0"/></linearGradient></defs>
<path d="M4.5 3.5h18l7 7v24h-25z" fill="#fcfcfc" stroke="#8aa4c4"/>
<path d="M22.5 3.5v7h7" fill="#fff" stroke="#a8bcd4"/>
<rect x="8" y="7" width="5" height="1.2" fill="#505866"/><rect x="8" y="10" width="4" height="1.2" fill="#666"/><rect x="19" y="10" width="4" height="1.2" fill="#666"/>
<path d="M8 13.4h7M19 13.4h7M8 15.4h7M19 15.4h7" stroke="#a4bcd8" stroke-width="0.9"/>
<rect x="8" y="18.5" width="18" height="8.5" fill="#fff" stroke="#9ab0cc"/>
<rect x="8.5" y="19" width="17" height="2.5" fill="#d4e0ee"/>
<path d="M14 18.5v8.5M20 18.5v8.5" stroke="#a4bcd8"/>
<path d="M8 29h7M8 31h7" stroke="#a4bcd8" stroke-width="0.9"/>
<path d="M20 19.5 H28 A6 6 0 0 1 28 31.5 H25.5 V35 L18.3 29.3 L25.5 23.5 V27.5 H28 A2 2 0 0 0 28 23.5 H20 Z" fill="url(#rarr)" stroke="#1f74c4" stroke-width="0.6"/></svg>
<div class="t" style="left:827.90px;top:91.00px;transform:scaleX(0.9958)">Başlangıç Durumuna Döndür</div>
<div class="a" style="left:994px;top:95px;width:0px;height:0px;border-left:4px solid transparent;border-right:4px solid transparent;border-top:4px solid #222"></div>
<div class="a" style="left:484px;top:120px;width:1010px;height:855px;background:#fff"></div>
<div class="a" style="left:486px;top:120px;width:1px;height:639px;background:#c9d2dc"></div>
<div class="a" style="left:487px;top:120px;width:996px;height:21px;background:linear-gradient(#e1eefd,#d3e6fc 8px,#b9d7fa 8px,#bad8fa)"></div>
<div class="a" style="left:574px;top:120px;width:139px;height:21px;background:linear-gradient(#fdd9a6,#fcc88f 8px,#fea840 8px,#fdd06e)"></div>
<div class="a" style="left:487px;top:141px;width:996px;height:1px;background:#ccd4de"></div>
<div class="a" style="left:504px;top:142px;width:979px;height:22px;background:#fffde2"></div>
<div class="a" style="left:487px;top:142px;width:16px;height:616px;background:#d6e7fb"></div>
<div class="a" style="left:504px;top:165px;width:979px;height:21px;background:#5f9bcb"></div>
<div class="a" style="left:504px;top:187px;width:979px;height:21px;background:#e4ebfc"></div>
<div class="a" style="left:504px;top:209px;width:979px;height:21px;background:#ffffff"></div>
<div class="a" style="left:504px;top:231px;width:979px;height:21px;background:#e4ebfc"></div>
<div class="a" style="left:504px;top:253px;width:979px;height:21px;background:#ffffff"></div>
<div class="a" style="left:504px;top:275px;width:979px;height:21px;background:#e4ebfc"></div>
<div class="a" style="left:504px;top:297px;width:979px;height:21px;background:#ffffff"></div>
<div class="a" style="left:504px;top:319px;width:979px;height:21px;background:#e4ebfc"></div>
<div class="a" style="left:504px;top:341px;width:979px;height:21px;background:#ffffff"></div>
<div class="a" style="left:504px;top:363px;width:979px;height:21px;background:#e4ebfc"></div>
<div class="a" style="left:504px;top:385px;width:979px;height:21px;background:#ffffff"></div>
<div class="a" style="left:504px;top:407px;width:979px;height:21px;background:#e4ebfc"></div>
<div class="a" style="left:504px;top:429px;width:979px;height:21px;background:#ffffff"></div>
<div class="a" style="left:504px;top:451px;width:979px;height:21px;background:#e4ebfc"></div>
<div class="a" style="left:504px;top:473px;width:979px;height:21px;background:#ffffff"></div>
<div class="a" style="left:504px;top:495px;width:979px;height:21px;background:#e4ebfc"></div>
<div class="a" style="left:504px;top:517px;width:979px;height:21px;background:#ffffff"></div>
<div class="a" style="left:504px;top:539px;width:979px;height:21px;background:#e4ebfc"></div>
<div class="a" style="left:504px;top:561px;width:979px;height:21px;background:#ffffff"></div>
<div class="a" style="left:504px;top:583px;width:979px;height:21px;background:#e4ebfc"></div>
<div class="a" style="left:504px;top:605px;width:979px;height:21px;background:#ffffff"></div>
<div class="a" style="left:504px;top:627px;width:979px;height:21px;background:#e4ebfc"></div>
<div class="a" style="left:504px;top:649px;width:979px;height:21px;background:#ffffff"></div>
<div class="a" style="left:504px;top:671px;width:979px;height:21px;background:#e4ebfc"></div>
<div class="a" style="left:504px;top:693px;width:979px;height:21px;background:#ffffff"></div>
<div class="a" style="left:504px;top:715px;width:979px;height:21px;background:#e4ebfc"></div>
<div class="a" style="left:504px;top:737px;width:979px;height:21px;background:#ffffff"></div>
<div class="a" style="left:487px;top:164px;width:996px;height:1px;background:#e0e0e0"></div>
<div class="a" style="left:487px;top:186px;width:996px;height:1px;background:#e0e0e0"></div>
<div class="a" style="left:487px;top:208px;width:996px;height:1px;background:#e0e0e0"></div>
<div class="a" style="left:487px;top:230px;width:996px;height:1px;background:#e0e0e0"></div>
<div class="a" style="left:487px;top:252px;width:996px;height:1px;background:#e0e0e0"></div>
<div class="a" style="left:487px;top:274px;width:996px;height:1px;background:#e0e0e0"></div>
<div class="a" style="left:487px;top:296px;width:996px;height:1px;background:#e0e0e0"></div>
<div class="a" style="left:487px;top:318px;width:996px;height:1px;background:#e0e0e0"></div>
<div class="a" style="left:487px;top:340px;width:996px;height:1px;background:#e0e0e0"></div>
<div class="a" style="left:487px;top:362px;width:996px;height:1px;background:#e0e0e0"></div>
<div class="a" style="left:487px;top:384px;width:996px;height:1px;background:#e0e0e0"></div>
<div class="a" style="left:487px;top:406px;width:996px;height:1px;background:#e0e0e0"></div>
<div class="a" style="left:487px;top:428px;width:996px;height:1px;background:#e0e0e0"></div>
<div class="a" style="left:487px;top:450px;width:996px;height:1px;background:#e0e0e0"></div>
<div class="a" style="left:487px;top:472px;width:996px;height:1px;background:#e0e0e0"></div>
<div class="a" style="left:487px;top:494px;width:996px;height:1px;background:#e0e0e0"></div>
<div class="a" style="left:487px;top:516px;width:996px;height:1px;background:#e0e0e0"></div>
<div class="a" style="left:487px;top:538px;width:996px;height:1px;background:#e0e0e0"></div>
<div class="a" style="left:487px;top:560px;width:996px;height:1px;background:#e0e0e0"></div>
<div class="a" style="left:487px;top:582px;width:996px;height:1px;background:#e0e0e0"></div>
<div class="a" style="left:487px;top:604px;width:996px;height:1px;background:#e0e0e0"></div>
<div class="a" style="left:487px;top:626px;width:996px;height:1px;background:#e0e0e0"></div>
<div class="a" style="left:487px;top:648px;width:996px;height:1px;background:#e0e0e0"></div>
<div class="a" style="left:487px;top:670px;width:996px;height:1px;background:#e0e0e0"></div>
<div class="a" style="left:487px;top:692px;width:996px;height:1px;background:#e0e0e0"></div>
<div class="a" style="left:487px;top:714px;width:996px;height:1px;background:#e0e0e0"></div>
<div class="a" style="left:487px;top:736px;width:996px;height:1px;background:#e0e0e0"></div>
<div class="a" style="left:487px;top:758px;width:996px;height:1px;background:#e0e0e0"></div>
<div class="a" style="left:503px;top:120px;width:1px;height:638px;background:#d9d9d9"></div>
<div class="a" style="left:573px;top:120px;width:1px;height:638px;background:#d9d9d9"></div>
<div class="a" style="left:713px;top:120px;width:1px;height:638px;background:#d9d9d9"></div>
<div class="a" style="left:793px;top:120px;width:1px;height:638px;background:#d9d9d9"></div>
<div class="a" style="left:893px;top:120px;width:1px;height:638px;background:#d9d9d9"></div>
<div class="a" style="left:1013px;top:120px;width:1px;height:638px;background:#d9d9d9"></div>
<div class="a" style="left:1093px;top:120px;width:1px;height:638px;background:#d9d9d9"></div>
<div class="a" style="left:1173px;top:120px;width:1px;height:638px;background:#d9d9d9"></div>
<div class="a" style="left:1213px;top:120px;width:1px;height:638px;background:#d9d9d9"></div>
<div class="a" style="left:1342px;top:120px;width:1px;height:638px;background:#d9d9d9"></div>
<div class="a" style="left:1422px;top:120px;width:1px;height:638px;background:#d9d9d9"></div>
<div class="a" style="left:1482px;top:120px;width:1px;height:638px;background:#d9d9d9"></div>
<div class="a" style="left:503px;top:120px;width:1px;height:21px;background:#c4d4e6"></div>
<div class="a" style="left:573px;top:120px;width:1px;height:21px;background:#c4d4e6"></div>
<div class="a" style="left:713px;top:120px;width:1px;height:21px;background:#c4d4e6"></div>
<div class="a" style="left:793px;top:120px;width:1px;height:21px;background:#c4d4e6"></div>
<div class="a" style="left:893px;top:120px;width:1px;height:21px;background:#c4d4e6"></div>
<div class="a" style="left:1013px;top:120px;width:1px;height:21px;background:#c4d4e6"></div>
<div class="a" style="left:1093px;top:120px;width:1px;height:21px;background:#c4d4e6"></div>
<div class="a" style="left:1173px;top:120px;width:1px;height:21px;background:#c4d4e6"></div>
<div class="a" style="left:1213px;top:120px;width:1px;height:21px;background:#c4d4e6"></div>
<div class="a" style="left:1342px;top:120px;width:1px;height:21px;background:#c4d4e6"></div>
<div class="a" style="left:1422px;top:120px;width:1px;height:21px;background:#c4d4e6"></div>
<div class="a" style="left:1482px;top:120px;width:1px;height:21px;background:#c4d4e6"></div>
<div class="t" style="left:507.70px;top:126.00px;transform:scaleX(1.0019);font-weight:bold">Tarih</div>
<div class="t" style="left:577.72px;top:126.00px;transform:scaleX(0.9652);font-weight:bold">Fatura Numarası</div>
<div class="t" style="left:717.70px;top:126.00px;transform:scaleX(0.9960);font-weight:bold">Belge No</div>
<div class="t" style="left:797.72px;top:126.00px;transform:scaleX(0.9588);font-weight:bold">Fatura Tipi</div>
<div class="t" style="left:897.73px;top:126.00px;transform:scaleX(0.9427);font-weight:bold">Cari Hesap</div>
<div class="t" style="left:1039.47px;top:126.00px;transform:scaleX(1.0525);font-weight:bold">Net Tutar</div>
<div class="t" style="left:1102.64px;top:126.00px;transform:scaleX(0.9143);font-weight:bold">Raporlama ...</div>
<div class="t" style="left:1177.76px;top:126.00px;transform:scaleX(0.8745);font-weight:bold">Fatu...</div>
<div class="t" style="left:1217.71px;top:126.00px;transform:scaleX(0.9765);font-weight:bold">E-Fatura Durumu</div>
<div class="t" style="left:1346.72px;top:126.00px;transform:scaleX(0.9543);font-weight:bold">Dok.İz. Nu...</div>
<div class="t" style="left:1426.69px;top:126.00px;transform:scaleX(1.0190);font-weight:bold">Durum</div>
<div class="a" style="left:703px;top:128px;width:0px;height:0px;border-left:5px solid transparent;border-right:5px solid transparent;border-bottom:5px solid #111"></div>
<div class="a" style="left:492px;top:170px;width:0px;height:0px;border-top:6px solid transparent;border-bottom:6px solid transparent;border-left:6px solid #000"></div>
<div class="t" style="left:507.84px;top:170.00px;transform:scaleX(0.9150);color:#fff">12.10.2018</div>
<div class="t" style="left:577.85px;top:170.00px;transform:scaleX(0.9035);color:#fff">ARV2018000000010</div>
<div class="t" style="left:797.81px;top:170.00px;transform:scaleX(0.9865);color:#fff">Toptan Satış</div>
<div class="t" style="left:897.85px;top:170.00px;transform:scaleX(0.8913);color:#fff">0000000000000006 [İ...</div>
<div class="t" style="left:1017.16px;top:170.00px;transform:scaleX(0.8825);color:#fff">5.900.000,00 ...</div>
<div class="t" style="left:1141.56px;top:170.00px;transform:scaleX(0.9050);color:#fff">0,00 $</div>
<div class="t" style="left:1177.84px;top:170.00px;transform:scaleX(0.9120);color:#fff">E-Ar...</div>
<div class="t" style="left:1217.82px;top:170.00px;transform:scaleX(0.9565);color:#fff">GİB'e Gönderilecek</div>
<div class="t" style="left:1426.83px;top:170.00px;transform:scaleX(0.9388);color:#fff">Gerçek</div>
<div class="t" style="left:507.84px;top:192.00px;transform:scaleX(0.9150);color:#000">02.02.2018</div>
<div class="t" style="left:577.85px;top:192.00px;transform:scaleX(0.9037);color:#000">EAV2018000000003</div>
<div class="t" style="left:797.81px;top:192.00px;transform:scaleX(0.9865);color:#000">Toptan Satış</div>
<div class="t" style="left:897.85px;top:192.00px;transform:scaleX(0.8972);color:#000">0000000000000004 [...</div>
<div class="t" style="left:1021.56px;top:192.00px;transform:scaleX(0.9094);color:#000">178.933,75 TL</div>
<div class="t" style="left:1141.56px;top:192.00px;transform:scaleX(0.9050);color:#000">0,00 $</div>
<div class="t" style="left:1177.84px;top:192.00px;transform:scaleX(0.9120);color:#000">E-Ar...</div>
<div class="t" style="left:1217.80px;top:192.00px;transform:scaleX(0.9915);color:#000">Sunucuya Gönderildi</div>
<div class="t" style="left:1426.83px;top:192.00px;transform:scaleX(0.9388);color:#000">Gerçek</div>
<div class="t" style="left:507.84px;top:214.00px;transform:scaleX(0.9150);color:#000">07.02.2018</div>
<div class="t" style="left:577.85px;top:214.00px;transform:scaleX(0.9041);color:#000">EID2018000000001</div>
<div class="t" style="left:797.81px;top:214.00px;transform:scaleX(0.9865);color:#000">Toptan Satış</div>
<div class="t" style="left:897.85px;top:214.00px;transform:scaleX(0.8972);color:#000">0000000000000001 [...</div>
<div class="t" style="left:1021.56px;top:214.00px;transform:scaleX(0.9094);color:#000">178.933,75 TL</div>
<div class="t" style="left:1141.56px;top:214.00px;transform:scaleX(0.9050);color:#000">0,00 $</div>
<div class="t" style="left:1177.84px;top:214.00px;transform:scaleX(0.9120);color:#000">E-Ar...</div>
<div class="t" style="left:1217.82px;top:214.00px;transform:scaleX(0.9565);color:#000">GİB'e Gönderilecek</div>
<div class="t" style="left:1426.83px;top:214.00px;transform:scaleX(0.9388);color:#000">Gerçek</div>
<div class="t" style="left:507.84px;top:236.00px;transform:scaleX(0.9150);color:#000">07.02.2018</div>
<div class="t" style="left:577.85px;top:236.00px;transform:scaleX(0.9041);color:#000">EID2018000000002</div>
<div class="t" style="left:797.81px;top:236.00px;transform:scaleX(0.9865);color:#000">Toptan Satış</div>
<div class="t" style="left:897.85px;top:236.00px;transform:scaleX(0.8972);color:#000">0000000000000001 [...</div>
<div class="t" style="left:1021.56px;top:236.00px;transform:scaleX(0.9094);color:#000">178.933,75 TL</div>
<div class="t" style="left:1141.56px;top:236.00px;transform:scaleX(0.9050);color:#000">0,00 $</div>
<div class="t" style="left:1177.84px;top:236.00px;transform:scaleX(0.9120);color:#000">E-Ar...</div>
<div class="t" style="left:1217.82px;top:236.00px;transform:scaleX(0.9565);color:#000">GİB'e Gönderilecek</div>
<div class="t" style="left:1426.83px;top:236.00px;transform:scaleX(0.9388);color:#000">Gerçek</div>
<div class="t" style="left:507.84px;top:258.00px;transform:scaleX(0.9150);color:#000">26.04.2018</div>
<div class="t" style="left:577.85px;top:258.00px;transform:scaleX(0.9041);color:#000">EID2018000000003</div>
<div class="t" style="left:797.81px;top:258.00px;transform:scaleX(0.9865);color:#000">Toptan Satış</div>
<div class="t" style="left:897.85px;top:258.00px;transform:scaleX(0.8972);color:#000">0000000000000003 [...</div>
<div class="t" style="left:1043.92px;top:258.00px;transform:scaleX(0.9188);color:#000">111,00 TL</div>
<div class="t" style="left:1141.56px;top:258.00px;transform:scaleX(0.9050);color:#000">0,00 $</div>
<div class="t" style="left:1177.85px;top:258.00px;transform:scaleX(0.9087);color:#000">E-Fa...</div>
<div class="t" style="left:1217.82px;top:258.00px;transform:scaleX(0.9621);color:#000">GİB'e Gönderildi</div>
<div class="t" style="left:1426.83px;top:258.00px;transform:scaleX(0.9388);color:#000">Gerçek</div>
<div class="t" style="left:507.84px;top:280.00px;transform:scaleX(0.9150);color:#000">12.04.2018</div>
<div class="t" style="left:577.85px;top:280.00px;transform:scaleX(0.9041);color:#000">EID2018000000007</div>
<div class="t" style="left:797.81px;top:280.00px;transform:scaleX(0.9865);color:#000">Toptan Satış</div>
<div class="t" style="left:897.85px;top:280.00px;transform:scaleX(0.8972);color:#000">0000000000000001 [...</div>
<div class="t" style="left:1021.56px;top:280.00px;transform:scaleX(0.9094);color:#000">178.933,75 TL</div>
<div class="t" style="left:1141.56px;top:280.00px;transform:scaleX(0.9050);color:#000">0,00 $</div>
<div class="t" style="left:1177.84px;top:280.00px;transform:scaleX(0.9120);color:#000">E-Ar...</div>
<div class="t" style="left:1217.82px;top:280.00px;transform:scaleX(0.9565);color:#000">GİB'e Gönderilecek</div>
<div class="t" style="left:1426.83px;top:280.00px;transform:scaleX(0.9388);color:#000">Gerçek</div>
<div class="t" style="left:507.84px;top:302.00px;transform:scaleX(0.9150);color:#000">12.04.2018</div>
<div class="t" style="left:577.85px;top:302.00px;transform:scaleX(0.9041);color:#000">EID2018000000008</div>
<div class="t" style="left:797.81px;top:302.00px;transform:scaleX(0.9865);color:#000">Toptan Satış</div>
<div class="t" style="left:897.85px;top:302.00px;transform:scaleX(0.8972);color:#000">0000000000000005 [...</div>
<div class="t" style="left:1021.56px;top:302.00px;transform:scaleX(0.9094);color:#000">178.933,75 TL</div>
<div class="t" style="left:1141.56px;top:302.00px;transform:scaleX(0.9050);color:#000">0,00 $</div>
<div class="t" style="left:1177.84px;top:302.00px;transform:scaleX(0.9102);color:#000">Kağı...</div>
<div class="t" style="left:1217.82px;top:302.00px;transform:scaleX(0.9565);color:#000">GİB'e Gönderilecek</div>
<div class="t" style="left:1426.83px;top:302.00px;transform:scaleX(0.9388);color:#000">Gerçek</div>
<div class="t" style="left:507.84px;top:324.00px;transform:scaleX(0.9150);color:#000">02.05.2018</div>
<div class="t" style="left:577.85px;top:324.00px;transform:scaleX(0.9041);color:#000">EID2018000000010</div>
<div class="t" style="left:797.81px;top:324.00px;transform:scaleX(0.9865);color:#000">Toptan Satış</div>
<div class="t" style="left:897.85px;top:324.00px;transform:scaleX(0.8972);color:#000">0000000000000003 [...</div>
<div class="t" style="left:1042.34px;top:324.00px;transform:scaleX(0.9179);color:#000">590,00 TL</div>
<div class="t" style="left:1141.56px;top:324.00px;transform:scaleX(0.9050);color:#000">0,00 $</div>
<div class="t" style="left:1177.85px;top:324.00px;transform:scaleX(0.9087);color:#000">E-Fa...</div>
<div class="t" style="left:1217.82px;top:324.00px;transform:scaleX(0.9621);color:#000">GİB'e Gönderildi</div>
<div class="t" style="left:1426.83px;top:324.00px;transform:scaleX(0.9388);color:#000">Gerçek</div>
<div class="t" style="left:507.84px;top:346.00px;transform:scaleX(0.9150);color:#000">02.05.2018</div>
<div class="t" style="left:577.85px;top:346.00px;transform:scaleX(0.9042);color:#000">EID2018000000011</div>
<div class="t" style="left:797.81px;top:346.00px;transform:scaleX(0.9865);color:#000">Toptan Satış</div>
<div class="t" style="left:897.85px;top:346.00px;transform:scaleX(0.8972);color:#000">0000000000000003 [...</div>
<div class="t" style="left:1042.34px;top:346.00px;transform:scaleX(0.9179);color:#000">944,00 TL</div>
<div class="t" style="left:1141.56px;top:346.00px;transform:scaleX(0.9050);color:#000">0,00 $</div>
<div class="t" style="left:1177.85px;top:346.00px;transform:scaleX(0.9087);color:#000">E-Fa...</div>
<div class="t" style="left:1217.82px;top:346.00px;transform:scaleX(0.9621);color:#000">GİB'e Gönderildi</div>
<div class="t" style="left:1426.83px;top:346.00px;transform:scaleX(0.9388);color:#000">Gerçek</div>
<div class="t" style="left:507.84px;top:368.00px;transform:scaleX(0.9150);color:#000">02.05.2018</div>
<div class="t" style="left:577.85px;top:368.00px;transform:scaleX(0.9041);color:#000">EID2018000000012</div>
<div class="t" style="left:797.81px;top:368.00px;transform:scaleX(0.9865);color:#000">Toptan Satış</div>
<div class="t" style="left:897.85px;top:368.00px;transform:scaleX(0.8972);color:#000">0000000000000003 [...</div>
<div class="t" style="left:1033.43px;top:368.00px;transform:scaleX(0.9135);color:#000">2.360,00 TL</div>
<div class="t" style="left:1141.56px;top:368.00px;transform:scaleX(0.9050);color:#000">0,00 $</div>
<div class="t" style="left:1177.85px;top:368.00px;transform:scaleX(0.9087);color:#000">E-Fa...</div>
<div class="t" style="left:1217.82px;top:368.00px;transform:scaleX(0.9621);color:#000">GİB'e Gönderildi</div>
<div class="t" style="left:1426.83px;top:368.00px;transform:scaleX(0.9388);color:#000">Gerçek</div>
<div class="t" style="left:507.84px;top:390.00px;transform:scaleX(0.9150);color:#000">02.05.2018</div>
<div class="t" style="left:577.85px;top:390.00px;transform:scaleX(0.9041);color:#000">EID2018000000013</div>
<div class="t" style="left:797.81px;top:390.00px;transform:scaleX(0.9865);color:#000">Toptan Satış</div>
<div class="t" style="left:897.85px;top:390.00px;transform:scaleX(0.8972);color:#000">0000000000000003 [...</div>
<div class="t" style="left:1033.43px;top:390.00px;transform:scaleX(0.9135);color:#000">1.180,00 TL</div>
<div class="t" style="left:1141.56px;top:390.00px;transform:scaleX(0.9050);color:#000">0,00 $</div>
<div class="t" style="left:1177.85px;top:390.00px;transform:scaleX(0.9087);color:#000">E-Fa...</div>
<div class="t" style="left:1217.82px;top:390.00px;transform:scaleX(0.9621);color:#000">GİB'e Gönderildi</div>
<div class="t" style="left:1426.83px;top:390.00px;transform:scaleX(0.9388);color:#000">Gerçek</div>
<div class="t" style="left:507.84px;top:412.00px;transform:scaleX(0.9150);color:#000">02.01.2018</div>
<div class="t" style="left:577.85px;top:412.00px;transform:scaleX(0.9041);color:#000">EID2018000000014</div>
<div class="t" style="left:797.81px;top:412.00px;transform:scaleX(0.9865);color:#000">Toptan Satış</div>
<div class="t" style="left:897.85px;top:412.00px;transform:scaleX(0.8972);color:#000">0000000000000001 [...</div>
<div class="t" style="left:1042.34px;top:412.00px;transform:scaleX(0.9179);color:#000">590,00 TL</div>
<div class="t" style="left:1141.56px;top:412.00px;transform:scaleX(0.9050);color:#000">0,00 $</div>
<div class="t" style="left:1177.85px;top:412.00px;transform:scaleX(0.9087);color:#000">E-Fa...</div>
<div class="t" style="left:1217.82px;top:412.00px;transform:scaleX(0.9621);color:#000">GİB'e Gönderildi</div>
<div class="t" style="left:1426.83px;top:412.00px;transform:scaleX(0.9388);color:#000">Gerçek</div>
<div class="t" style="left:507.84px;top:434.00px;transform:scaleX(0.9150);color:#000">28.08.2018</div>
<div class="t" style="left:577.85px;top:434.00px;transform:scaleX(0.9041);color:#000">EID2018000000015</div>
<div class="t" style="left:797.81px;top:434.00px;transform:scaleX(0.9865);color:#000">Toptan Satış</div>
<div class="t" style="left:897.85px;top:434.00px;transform:scaleX(0.8972);color:#000">0000000000000001 [...</div>
<div class="t" style="left:1033.43px;top:434.00px;transform:scaleX(0.9135);color:#000">1.298,00 TL</div>
<div class="t" style="left:1141.56px;top:434.00px;transform:scaleX(0.9050);color:#000">0,00 $</div>
<div class="t" style="left:1177.85px;top:434.00px;transform:scaleX(0.9087);color:#000">E-Fa...</div>
<div class="t" style="left:1217.82px;top:434.00px;transform:scaleX(0.9621);color:#000">GİB'e Gönderildi</div>
<div class="t" style="left:1426.83px;top:434.00px;transform:scaleX(0.9388);color:#000">Gerçek</div>
<div class="t" style="left:507.84px;top:456.00px;transform:scaleX(0.9150);color:#000">03.01.2018</div>
<div class="t" style="left:577.85px;top:456.00px;transform:scaleX(0.9041);color:#000">EID2018000000016</div>
<div class="t" style="left:797.81px;top:456.00px;transform:scaleX(0.9865);color:#000">Toptan Satış</div>
<div class="t" style="left:897.85px;top:456.00px;transform:scaleX(0.8972);color:#000">0000000000000001 [...</div>
<div class="t" style="left:1042.34px;top:456.00px;transform:scaleX(0.9179);color:#000">590,00 TL</div>
<div class="t" style="left:1141.56px;top:456.00px;transform:scaleX(0.9050);color:#000">0,00 $</div>
<div class="t" style="left:1177.85px;top:456.00px;transform:scaleX(0.9087);color:#000">E-Fa...</div>
<div class="t" style="left:1217.82px;top:456.00px;transform:scaleX(0.9621);color:#000">GİB'e Gönderildi</div>
<div class="t" style="left:1426.83px;top:456.00px;transform:scaleX(0.9388);color:#000">Gerçek</div>
<div class="t" style="left:507.84px;top:478.00px;transform:scaleX(0.9150);color:#000">04.01.2018</div>
<div class="t" style="left:577.85px;top:478.00px;transform:scaleX(0.9041);color:#000">EID2018000000017</div>
<div class="t" style="left:797.81px;top:478.00px;transform:scaleX(0.9865);color:#000">Toptan Satış</div>
<div class="t" style="left:897.85px;top:478.00px;transform:scaleX(0.8972);color:#000">0000000000000001 [...</div>
<div class="t" style="left:1042.34px;top:478.00px;transform:scaleX(0.9179);color:#000">590,00 TL</div>
<div class="t" style="left:1141.56px;top:478.00px;transform:scaleX(0.9050);color:#000">0,00 $</div>
<div class="t" style="left:1177.84px;top:478.00px;transform:scaleX(0.9120);color:#000">E-Ar...</div>
<div class="t" style="left:1217.82px;top:478.00px;transform:scaleX(0.9565);color:#000">GİB'e Gönderilecek</div>
<div class="t" style="left:1426.83px;top:478.00px;transform:scaleX(0.9388);color:#000">Gerçek</div>
<div class="t" style="left:507.84px;top:500.00px;transform:scaleX(0.9150);color:#000">19.07.2018</div>
<div class="t" style="left:577.85px;top:500.00px;transform:scaleX(0.9041);color:#000">EID2018000000018</div>
<div class="t" style="left:797.81px;top:500.00px;transform:scaleX(0.9865);color:#000">Toptan Satış</div>
<div class="t" style="left:897.85px;top:500.00px;transform:scaleX(0.8972);color:#000">0000000000000004 [...</div>
<div class="t" style="left:1033.43px;top:500.00px;transform:scaleX(0.9135);color:#000">1.762,92 TL</div>
<div class="t" style="left:1141.56px;top:500.00px;transform:scaleX(0.9050);color:#000">0,00 $</div>
<div class="t" style="left:1177.84px;top:500.00px;transform:scaleX(0.9120);color:#000">E-Ar...</div>
<div class="t" style="left:1217.82px;top:500.00px;transform:scaleX(0.9565);color:#000">GİB'e Gönderilecek</div>
<div class="t" style="left:1426.83px;top:500.00px;transform:scaleX(0.9388);color:#000">Gerçek</div>
<div class="t" style="left:507.84px;top:522.00px;transform:scaleX(0.9150);color:#000">08.01.2018</div>
<div class="t" style="left:577.85px;top:522.00px;transform:scaleX(0.9041);color:#000">EID2018000000021</div>
<div class="t" style="left:797.81px;top:522.00px;transform:scaleX(0.9865);color:#000">Toptan Satış</div>
<div class="t" style="left:897.85px;top:522.00px;transform:scaleX(0.8972);color:#000">0000000000000001 [...</div>
<div class="t" style="left:1042.34px;top:522.00px;transform:scaleX(0.9179);color:#000">885,00 TL</div>
<div class="t" style="left:1141.56px;top:522.00px;transform:scaleX(0.9050);color:#000">0,00 $</div>
<div class="t" style="left:1177.84px;top:522.00px;transform:scaleX(0.9120);color:#000">E-Ar...</div>
<div class="t" style="left:1217.82px;top:522.00px;transform:scaleX(0.9565);color:#000">GİB'e Gönderilecek</div>
<div class="t" style="left:1426.83px;top:522.00px;transform:scaleX(0.9388);color:#000">Gerçek</div>
<div class="t" style="left:507.84px;top:544.00px;transform:scaleX(0.9150);color:#000">09.01.2018</div>
<div class="t" style="left:577.85px;top:544.00px;transform:scaleX(0.9041);color:#000">EID2018000000022</div>
<div class="t" style="left:797.81px;top:544.00px;transform:scaleX(0.9865);color:#000">Toptan Satış</div>
<div class="t" style="left:897.85px;top:544.00px;transform:scaleX(0.8972);color:#000">0000000000000001 [...</div>
<div class="t" style="left:1042.34px;top:544.00px;transform:scaleX(0.9179);color:#000">743,40 TL</div>
<div class="t" style="left:1141.56px;top:544.00px;transform:scaleX(0.9050);color:#000">0,00 $</div>
<div class="t" style="left:1177.84px;top:544.00px;transform:scaleX(0.9120);color:#000">E-Ar...</div>
<div class="t" style="left:1217.82px;top:544.00px;transform:scaleX(0.9565);color:#000">GİB'e Gönderilecek</div>
<div class="t" style="left:1426.83px;top:544.00px;transform:scaleX(0.9388);color:#000">Gerçek</div>
<div class="t" style="left:507.84px;top:566.00px;transform:scaleX(0.9150);color:#000">07.02.2018</div>
<div class="t" style="left:577.85px;top:566.00px;transform:scaleX(0.9032);color:#000">EMR2018000000001</div>
<div class="t" style="left:797.81px;top:566.00px;transform:scaleX(0.9865);color:#000">Toptan Satış</div>
<div class="t" style="left:897.85px;top:566.00px;transform:scaleX(0.8972);color:#000">0000000000000005 [...</div>
<div class="t" style="left:1021.56px;top:566.00px;transform:scaleX(0.9094);color:#000">178.933,75 TL</div>
<div class="t" style="left:1141.56px;top:566.00px;transform:scaleX(0.9050);color:#000">0,00 $</div>
<div class="t" style="left:1177.84px;top:566.00px;transform:scaleX(0.9102);color:#000">Kağı...</div>
<div class="t" style="left:1217.82px;top:566.00px;transform:scaleX(0.9565);color:#000">GİB'e Gönderilecek</div>
<div class="t" style="left:1426.83px;top:566.00px;transform:scaleX(0.9388);color:#000">Gerçek</div>
<div class="t" style="left:507.84px;top:588.00px;transform:scaleX(0.9150);color:#000">05.01.2018</div>
<div class="t" style="left:577.85px;top:588.00px;transform:scaleX(0.9032);color:#000">EMR2018000000002</div>
<div class="t" style="left:797.81px;top:588.00px;transform:scaleX(0.9865);color:#000">Toptan Satış</div>
<div class="t" style="left:897.85px;top:588.00px;transform:scaleX(0.8972);color:#000">0000000000000001 [...</div>
<div class="t" style="left:1042.34px;top:588.00px;transform:scaleX(0.9179);color:#000">236,00 TL</div>
<div class="t" style="left:1141.56px;top:588.00px;transform:scaleX(0.9050);color:#000">0,00 $</div>
<div class="t" style="left:1177.84px;top:588.00px;transform:scaleX(0.9120);color:#000">E-Ar...</div>
<div class="t" style="left:1217.82px;top:588.00px;transform:scaleX(0.9565);color:#000">GİB'e Gönderilecek</div>
<div class="t" style="left:1426.83px;top:588.00px;transform:scaleX(0.9388);color:#000">Gerçek</div>
<div class="t" style="left:507.84px;top:610.00px;transform:scaleX(0.9150);color:#000">26.04.2018</div>
<div class="t" style="left:577.85px;top:610.00px;transform:scaleX(0.9039);color:#000">GID2018000000008</div>
<div class="t" style="left:797.81px;top:610.00px;transform:scaleX(0.9865);color:#000">Toptan Satış</div>
<div class="t" style="left:897.85px;top:610.00px;transform:scaleX(0.8972);color:#000">0000000000000001 [...</div>
<div class="t" style="left:1042.34px;top:610.00px;transform:scaleX(0.9179);color:#000">374,69 TL</div>
<div class="t" style="left:1141.56px;top:610.00px;transform:scaleX(0.9050);color:#000">0,00 $</div>
<div class="t" style="left:1177.84px;top:610.00px;transform:scaleX(0.9120);color:#000">E-Ar...</div>
<div class="t" style="left:1217.82px;top:610.00px;transform:scaleX(0.9565);color:#000">GİB'e Gönderilecek</div>
<div class="t" style="left:1426.83px;top:610.00px;transform:scaleX(0.9388);color:#000">Gerçek</div>
<div class="t" style="left:507.84px;top:632.00px;transform:scaleX(0.9150);color:#000">26.04.2018</div>
<div class="t" style="left:577.85px;top:632.00px;transform:scaleX(0.9040);color:#000">IHR2018000000005</div>
<div class="t" style="left:797.81px;top:632.00px;transform:scaleX(0.9865);color:#000">Toptan Satış</div>
<div class="t" style="left:897.85px;top:632.00px;transform:scaleX(0.8972);color:#000">0000000000000005 [...</div>
<div class="t" style="left:1042.34px;top:632.00px;transform:scaleX(0.9179);color:#000">169,92 TL</div>
<div class="t" style="left:1141.56px;top:632.00px;transform:scaleX(0.9050);color:#000">0,00 $</div>
<div class="t" style="left:1177.85px;top:632.00px;transform:scaleX(0.9087);color:#000">E-Fa...</div>
<div class="t" style="left:1217.82px;top:632.00px;transform:scaleX(0.9621);color:#000">GİB'e Gönderildi</div>
<div class="t" style="left:1426.83px;top:632.00px;transform:scaleX(0.9388);color:#000">Gerçek</div>
<div class="t" style="left:507.84px;top:654.00px;transform:scaleX(0.9150);color:#000">26.04.2018</div>
<div class="t" style="left:577.85px;top:654.00px;transform:scaleX(0.9040);color:#000">IHR2018000000006</div>
<div class="t" style="left:797.81px;top:654.00px;transform:scaleX(0.9865);color:#000">Toptan Satış</div>
<div class="t" style="left:897.85px;top:654.00px;transform:scaleX(0.8972);color:#000">0000000000000005 [...</div>
<div class="t" style="left:1042.34px;top:654.00px;transform:scaleX(0.9179);color:#000">169,92 TL</div>
<div class="t" style="left:1141.56px;top:654.00px;transform:scaleX(0.9050);color:#000">0,00 $</div>
<div class="t" style="left:1177.85px;top:654.00px;transform:scaleX(0.9087);color:#000">E-Fa...</div>
<div class="t" style="left:1217.82px;top:654.00px;transform:scaleX(0.9621);color:#000">GİB'e Gönderildi</div>
<div class="t" style="left:1426.83px;top:654.00px;transform:scaleX(0.9388);color:#000">Gerçek</div>
<div class="t" style="left:507.84px;top:676.00px;transform:scaleX(0.9150);color:#000">20.04.2018</div>
<div class="t" style="left:577.85px;top:676.00px;transform:scaleX(0.9040);color:#000">IHR2018000000008</div>
<div class="t" style="left:797.81px;top:676.00px;transform:scaleX(0.9865);color:#000">Toptan Satış</div>
<div class="t" style="left:897.85px;top:676.00px;transform:scaleX(0.8972);color:#000">0000000000000005 [...</div>
<div class="t" style="left:1028.29px;top:676.00px;transform:scaleX(0.9115);color:#000">11.800,00 TL</div>
<div class="t" style="left:1141.56px;top:676.00px;transform:scaleX(0.9050);color:#000">0,00 $</div>
<div class="t" style="left:1177.84px;top:676.00px;transform:scaleX(0.9120);color:#000">E-Ar...</div>
<div class="t" style="left:1217.82px;top:676.00px;transform:scaleX(0.9565);color:#000">GİB'e Gönderilecek</div>
<div class="t" style="left:1426.83px;top:676.00px;transform:scaleX(0.9388);color:#000">Gerçek</div>
<div class="t" style="left:507.84px;top:698.00px;transform:scaleX(0.9150);color:#000">07.02.2018</div>
<div class="t" style="left:577.85px;top:698.00px;transform:scaleX(0.9040);color:#000">IHR2018000000010</div>
<div class="t" style="left:797.81px;top:698.00px;transform:scaleX(0.9865);color:#000">Toptan Satış</div>
<div class="t" style="left:897.85px;top:698.00px;transform:scaleX(0.8972);color:#000">0000000000000005 [...</div>
<div class="t" style="left:1021.56px;top:698.00px;transform:scaleX(0.9094);color:#000">178.933,75 TL</div>
<div class="t" style="left:1141.56px;top:698.00px;transform:scaleX(0.9050);color:#000">0,00 $</div>
<div class="t" style="left:1177.85px;top:698.00px;transform:scaleX(0.9087);color:#000">E-Fa...</div>
<div class="t" style="left:1217.82px;top:698.00px;transform:scaleX(0.9654);color:#000">GİB'de İşlenemedi</div>
<div class="t" style="left:1426.83px;top:698.00px;transform:scaleX(0.9388);color:#000">Gerçek</div>
<div class="t" style="left:507.84px;top:720.00px;transform:scaleX(0.9150);color:#000">12.10.2018</div>
<div class="t" style="left:577.85px;top:720.00px;transform:scaleX(0.9041);color:#000">IHR2018000000011</div>
<div class="t" style="left:797.81px;top:720.00px;transform:scaleX(0.9865);color:#000">Toptan Satış</div>
<div class="t" style="left:897.85px;top:720.00px;transform:scaleX(0.8913);color:#000">0000000000000006 [İ...</div>
<div class="t" style="left:1017.16px;top:720.00px;transform:scaleX(0.8825);color:#000">5.000.000,00 ...</div>
<div class="t" style="left:1141.56px;top:720.00px;transform:scaleX(0.9050);color:#000">0,00 $</div>
<div class="t" style="left:1177.85px;top:720.00px;transform:scaleX(0.9087);color:#000">E-Fa...</div>
<div class="t" style="left:1217.82px;top:720.00px;transform:scaleX(0.9621);color:#000">GİB'e Gönderildi</div>
<div class="t" style="left:1426.83px;top:720.00px;transform:scaleX(0.9388);color:#000">Gerçek</div>
<div class="t" style="left:507.84px;top:742.00px;transform:scaleX(0.9150);color:#000">12.10.2018</div>
<div class="t" style="left:577.85px;top:742.00px;transform:scaleX(0.9040);color:#000">IHR2018000000012</div>
<div class="t" style="left:797.81px;top:742.00px;transform:scaleX(0.9865);color:#000">Toptan Satış</div>
<div class="t" style="left:897.85px;top:742.00px;transform:scaleX(0.8913);color:#000">0000000000000006 [İ...</div>
<div class="t" style="left:1021.56px;top:742.00px;transform:scaleX(0.9094);color:#000">500.000,00 TL</div>
<div class="t" style="left:1141.56px;top:742.00px;transform:scaleX(0.9050);color:#000">0,00 $</div>
<div class="t" style="left:1177.84px;top:742.00px;transform:scaleX(0.9120);color:#000">E-Ar...</div>
<div class="t" style="left:1217.82px;top:742.00px;transform:scaleX(0.9565);color:#000">GİB'e Gönderilecek</div>
<div class="t" style="left:1426.83px;top:742.00px;transform:scaleX(0.9388);color:#000">Gerçek</div>
<div class="a" style="left:484px;top:975px;width:1010px;height:1px;background:#a0a0a0"></div>
<div class="a" style="left:484px;top:976px;width:1010px;height:21px;background:#f0f0f0"></div>
<div class="a" style="left:484px;top:997px;width:1010px;height:2px;background:#f7f7f7"></div>
<div class="a" style="left:486px;top:975px;width:68px;height:22px;background:#fff;border-bottom:1px solid #a0a0a0"></div>
<div class="a" style="left:554px;top:976px;width:1px;height:20px;background:#a0a0a0"></div>
<div class="a" style="left:601px;top:976px;width:1px;height:20px;background:#a0a0a0"></div>
<div class="a" style="left:653px;top:976px;width:1px;height:20px;background:#a0a0a0"></div>
<div class="t" style="left:490.03px;top:980.00px;transform:scaleX(0.9475)">Kayıt Listesi</div>
<div class="t" style="left:558.70px;top:980.00px;transform:scaleX(1.0000)">Filtreler</div>
<div class="t" style="left:606.12px;top:980.00px;transform:scaleX(0.9692)">Raporlar</div>
<div class="a" style="left:907px;top:51px;width:139px;height:29px;border:3px solid #ff0000;border-radius:3px"></div>
<div class="a" style="left:677px;top:76px;width:103px;height:48px;border:3px solid #ff0000;border-radius:3px"></div>
</body></html>
